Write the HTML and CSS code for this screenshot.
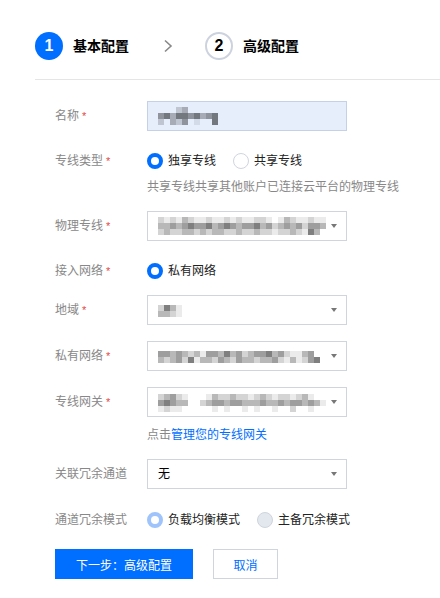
FILE: index.html
```html
<!DOCTYPE html>
<html lang="zh-CN">
<head>
<meta charset="utf-8">
<title>基本配置</title>
<link rel="stylesheet" href="styles.css">
</head>
<body>
<div class="steps">
  <div class="step step-active"><span class="num">1</span><span class="title">基本配置</span></div>
  <svg class="chev" width="10" height="14" viewBox="0 0 10 14"><polyline points="2,1.5 8,7 2,12.5" fill="none" stroke="#888" stroke-width="1.6"/></svg>
  <div class="step step-todo"><span class="num">2</span><span class="title">高级配置</span></div>
</div>
<div class="divider"></div>

<div class="form">
  <div class="item mt21">
    <div class="label">名称<em>*</em></div>
    <div class="control">
      <div class="input filled">
        <div class="mosaic mz10"><i class=k0></i><i class=k0></i><i class=k0></i><i class=k2></i><i class=k3></i><i class=k0></i><i class=k0></i><i class=k0></i><i class=k0></i><i class=k0></i><i class=k4></i><i class=k5></i><i class=k3></i><i class=k5></i><i class=k5></i><i class=k4></i><i class=k5></i><i class=k3></i><i class=k4></i><i class=k5></i><i class=k2></i><i class=k0></i><i class=k3></i><i class=k2></i><i class=k4></i><i class=k0></i><i class=k1></i><i class=k0></i><i class=k0></i><i class=k5></i></div>
      </div>
    </div>
  </div>

  <div class="item mt15">
    <div class="label">专线类型<em>*</em></div>
    <div class="control wide">
      <div class="radios">
        <span class="radio"><span class="dot on"></span>独享专线</span>
        <span class="radio"><span class="dot"></span>共享专线</span>
      </div>
      <div class="help mt2">共享专线共享其他账户已连接云平台的物理专线</div>
    </div>
  </div>

  <div class="item mt15">
    <div class="label">物理专线<em>*</em></div>
    <div class="control">
      <div class="select">
        <div class="mosaic mz28"><i class=k2></i><i class=k1></i><i class=k2></i><i class=k1></i><i class=k3></i><i class=k2></i><i class=k1></i><i class=k1></i><i class=k2></i><i class=k1></i><i class=k1></i><i class=k2></i><i class=k1></i><i class=k2></i><i class=k1></i><i class=k1></i><i class=k2></i><i class=k2></i><i class=k1></i><i class=k0></i><i class=k1></i><i class=k3></i><i class=k2></i><i class=k1></i><i class=k1></i><i class=k2></i><i class=k1></i><i class=k1></i><i class=k3></i><i class=k3></i><i class=k4></i><i class=k3></i><i class=k4></i><i class=k5></i><i class=k4></i><i class=k4></i><i class=k5></i><i class=k3></i><i class=k4></i><i class=k5></i><i class=k4></i><i class=k3></i><i class=k4></i><i class=k4></i><i class=k5></i><i class=k3></i><i class=k4></i><i class=k2></i><i class=k3></i><i class=k4></i><i class=k3></i><i class=k4></i><i class=k2></i><i class=k4></i><i class=k4></i><i class=k3></i><i class=k2></i><i class=k3></i><i class=k2></i><i class=k2></i><i class=k3></i><i class=k3></i><i class=k2></i><i class=k3></i><i class=k2></i><i class=k3></i><i class=k3></i><i class=k2></i><i class=k2></i><i class=k3></i><i class=k2></i><i class=k2></i><i class=k3></i><i class=k2></i><i class=k2></i><i class=k1></i><i class=k2></i><i class=k2></i><i class=k3></i><i class=k2></i><i class=k1></i><i class=k5></i><i class=k3></i><i class=k0></i></div>
        <span class="arrow"></span>
      </div>
    </div>
  </div>

  <div class="item mt15">
    <div class="label">接入网络<em>*</em></div>
    <div class="control">
      <div class="radios">
        <span class="radio"><span class="dot on"></span>私有网络</span>
      </div>
    </div>
  </div>

  <div class="item mt9">
    <div class="label">地域<em>*</em></div>
    <div class="control">
      <div class="select">
        <div class="mosaic mz4 rows2"><i class=k2></i><i class=k5></i><i class=k3></i><i class=k1></i><i class=k3></i><i class=k3></i><i class=k2></i><i class=k1></i></div>
        <span class="arrow"></span>
      </div>
    </div>
  </div>

  <div class="item mt16">
    <div class="label">私有网络<em>*</em></div>
    <div class="control">
      <div class="select">
        <div class="mosaic mz28 rows2"><i class=k4></i><i class=k4></i><i class=k3></i><i class=k4></i><i class=k3></i><i class=k2></i><i class=k3></i><i class=k1></i><i class=k4></i><i class=k4></i><i class=k3></i><i class=k5></i><i class=k3></i><i class=k4></i><i class=k2></i><i class=k3></i><i class=k4></i><i class=k4></i><i class=k5></i><i class=k3></i><i class=k4></i><i class=k2></i><i class=k1></i><i class=k1></i><i class=k3></i><i class=k4></i><i class=k0></i><i class=k0></i><i class=k3></i><i class=k2></i><i class=k3></i><i class=k4></i><i class=k2></i><i class=k5></i><i class=k1></i><i class=k3></i><i class=k3></i><i class=k2></i><i class=k4></i><i class=k3></i><i class=k2></i><i class=k4></i><i class=k3></i><i class=k3></i><i class=k2></i><i class=k3></i><i class=k3></i><i class=k4></i><i class=k2></i><i class=k1></i><i class=k3></i><i class=k1></i><i class=k2></i><i class=k4></i><i class=k5></i><i class=k0></i></div>
        <span class="arrow"></span>
      </div>
    </div>
  </div>

  <div class="item mt16">
    <div class="label">专线网关<em>*</em></div>
    <div class="control wide">
      <div class="select">
        <div class="mosaic mz28 rows3s"><i class=k2></i><i class=k3></i><i class=k4></i><i class=k2></i><i class=k1></i><i class=k0></i><i class=k0></i><i class=k0></i><i class=k1></i><i class=k3></i><i class=k2></i><i class=k2></i><i class=k3></i><i class=k2></i><i class=k2></i><i class=k1></i><i class=k2></i><i class=k3></i><i class=k2></i><i class=k1></i><i class=k2></i><i class=k2></i><i class=k1></i><i class=k2></i><i class=k3></i><i class=k1></i><i class=k0></i><i class=k0></i><i class=k4></i><i class=k5></i><i class=k4></i><i class=k3></i><i class=k3></i><i class=k0></i><i class=k0></i><i class=k2></i><i class=k3></i><i class=k4></i><i class=k4></i><i class=k3></i><i class=k4></i><i class=k4></i><i class=k3></i><i class=k3></i><i class=k3></i><i class=k4></i><i class=k3></i><i class=k3></i><i class=k4></i><i class=k3></i><i class=k4></i><i class=k4></i><i class=k3></i><i class=k4></i><i class=k3></i><i class=k1></i><i class=k1></i><i class=k2></i><i class=k1></i><i class=k1></i><i class=k0></i><i class=k0></i><i class=k0></i><i class=k0></i><i class=k0></i><i class=k1></i><i class=k0></i><i class=k1></i><i class=k0></i><i class=k0></i><i class=k1></i><i class=k0></i><i class=k1></i><i class=k0></i><i class=k0></i><i class=k1></i><i class=k0></i><i class=k0></i><i class=k2></i><i class=k0></i><i class=k0></i><i class=k1></i><i class=k0></i><i class=k0></i></div>
        <span class="arrow"></span>
      </div>
      <div class="help mt9">点击<a href="#">管理您的专线网关</a></div>
    </div>
  </div>

  <div class="item mt15">
    <div class="label">关联冗余通道</div>
    <div class="control">
      <div class="select">
        <span class="value">无</span>
        <span class="arrow"></span>
      </div>
    </div>
  </div>

  <div class="item mt16">
    <div class="label">通道冗余模式</div>
    <div class="control wide">
      <div class="radios">
        <span class="radio"><span class="dot on-dis"></span>负载均衡模式</span>
        <span class="radio"><span class="dot off-dis"></span>主备冗余模式</span>
      </div>
    </div>
  </div>

  <div class="actions">
    <button class="btn btn-primary" type="button">下一步：高级配置</button>
    <button class="btn btn-default" type="button">取消</button>
  </div>
</div>
</body>
</html>
```
FILE: styles.css
```css
html, body {
  margin: 0;
  background: #fff;
}
body {
  font-family: "Liberation Sans", "Noto Sans CJK SC", sans-serif;
  color: #000;
}

/* steps */
.steps {
  display: flex;
  align-items: center;
  height: 28px;
  padding: 32px 0 0 35px;
}
.step {
  display: flex;
  align-items: center;
}
.num {
  width: 28px;
  height: 28px;
  box-sizing: border-box;
  border-radius: 50%;
  display: flex;
  align-items: center;
  justify-content: center;
  font-size: 16px;
  font-weight: bold;
}
.step-active .num {
  background: #006eff;
  color: #fff;
}
.step-todo .num {
  border: 2px solid #cdd3de;
  color: #000;
}
.title {
  margin-left: 10px;
  font-size: 14px;
  font-weight: bold;
  line-height: 20px;
  color: #000;
}
.chev {
  margin: 0 32px 0 34px;
}
.divider {
  margin: 19px 0 0 35px;
  height: 1px;
  background: #e5e5e5;
}

/* form */
.form {
  padding-left: 55px;
}
.item {
  display: flex;
  align-items: flex-start;
}
.mt2 { margin-top: 2px; }
.mt9 { margin-top: 9px; }
.mt15 { margin-top: 15px; }
.mt16 { margin-top: 16px; }
.mt21 { margin-top: 21px; }

.label {
  width: 92px;
  flex: none;
  height: 30px;
  line-height: 30px;
  font-size: 12px;
  color: #888;
  white-space: nowrap;
}
.label em {
  font-style: normal;
  color: #e54545;
  margin-left: 3px;
  font-size: 11px;
}
.control {
  width: 200px;
}
.control.wide {
  width: 280px;
}
.input,
.select {
  box-sizing: border-box;
  width: 200px;
  height: 30px;
  border: 1px solid #cfd5de;
  background: #fff;
  display: flex;
  align-items: center;
  padding: 0 9px 0 10px;
  font-size: 12px;
}
.input.filled {
  background: #e6eefc;
  border-color: #c5d1e5;
}
.select {
  justify-content: space-between;
}
.value {
  color: #000;
  line-height: 18px;
}
.arrow {
  width: 0;
  height: 0;
  border-left: 3.5px solid transparent;
  border-right: 3.5px solid transparent;
  border-top: 4px solid #777;
  flex: none;
}

/* pixelated placeholders */
.mosaic {
  display: grid;
  grid-auto-rows: 6px;
}
.mosaic i { display: block; }
.mz10 { grid-template-columns: repeat(10, 6px); }
.mz28 { grid-template-columns: repeat(28, 6px); }
.mz4 { grid-template-columns: repeat(4, 6px); }
.rows2 { margin-top: 1px; }
.rows3s { margin-top: 2px; }
.k0 { background: transparent; }
.k1 { background: rgba(0, 0, 0, 0.08); }
.k2 { background: rgba(0, 0, 0, 0.17); }
.k3 { background: rgba(0, 0, 0, 0.28); }
.k4 { background: rgba(0, 0, 0, 0.38); }
.k5 { background: rgba(0, 0, 0, 0.5); }

/* radios */
.radios {
  display: flex;
  align-items: center;
  height: 30px;
}
.radio {
  display: flex;
  align-items: center;
  margin-right: 17px;
  font-size: 12px;
  color: #222;
  line-height: 18px;
  white-space: nowrap;
}
.dot {
  width: 16px;
  height: 16px;
  box-sizing: border-box;
  border-radius: 50%;
  border: 1px solid #cfd5de;
  background: #fff;
  margin-right: 5px;
  flex: none;
}
.dot.on {
  border: 4px solid #006eff;
}
.dot.on-dis {
  border: 4px solid #9ec4fb;
}
.dot.off-dis {
  background: #e3e7ee;
  border-color: #cfd5de;
}

.help {
  font-size: 12px;
  line-height: 18px;
  color: #888;
  white-space: nowrap;
}
.help a {
  color: #006eff;
  text-decoration: none;
}

/* actions */
.actions {
  display: flex;
  margin-top: 14px;
}
.btn {
  height: 30px;
  box-sizing: border-box;
  font-family: inherit;
  font-size: 12px;
  padding: 0;
  display: flex;
  align-items: center;
  justify-content: center;
  cursor: pointer;
}
.btn-primary {
  width: 138px;
  background: #006eff;
  color: #fff;
  border: none;
}
.btn-default {
  width: 65px;
  margin-left: 20px;
  background: #fff;
  color: #006eff;
  border: 1px solid #cfd5de;
}
```
